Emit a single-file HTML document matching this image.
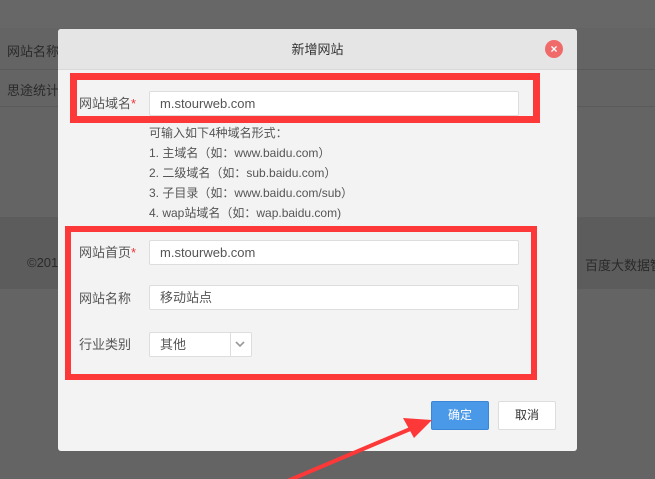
<!DOCTYPE html>
<html><head><meta charset="utf-8"><style>
*{margin:0;padding:0;box-sizing:border-box}
body{width:655px;height:479px;overflow:hidden;position:relative;background:#646464;font-family:"Liberation Sans","Noto Sans CJK SC",sans-serif;font-size:12px;color:#333}
.a{position:absolute;white-space:nowrap}
.inp{position:absolute;background:#fff;border:1px solid #ddd;border-radius:2px;font-size:13px;color:#555;padding-left:10px;line-height:23px}
.lab{position:absolute;left:79px;font-size:13px;color:#555}
.help{position:absolute;left:149px;font-size:12px;color:#555;line-height:20px;top:123px;white-space:nowrap}
</style></head><body>
<div class="a" style="left:0;top:0;width:655px;height:28px;background:#676767"></div>
<div class="a" style="left:0;top:69px;width:655px;height:1px;background:#5a5a5a"></div>
<div class="a" style="left:0;top:106px;width:655px;height:1px;background:#5a5a5a"></div>
<div class="a" style="left:7px;top:41px;font-size:13px;color:#2a2a2a">网站名称</div>
<div class="a" style="left:7px;top:80px;font-size:13px;color:#2a2a2a">思途统计</div>
<div class="a" style="left:0;top:217px;width:655px;height:72px;background:#5c5c5c"></div>
<div class="a" style="left:27px;top:255px;font-size:13px;color:#2a2a2a">©201</div>
<div class="a" style="left:585px;top:255px;font-size:13px;color:#2a2a2a">百度大数据智</div>

<div class="a" style="left:58px;top:29px;width:519px;height:422px;background:#f3f3f3;border-radius:3px;overflow:hidden">
 <div style="height:41px;background:#e5e5e5;border-bottom:1px solid #d8d8d8;text-align:center;line-height:41px;font-size:13px;color:#333">新增网站</div>
</div>
<div class="a" style="left:545px;top:40px;width:18px;height:18px;border-radius:50%;background:#f06a6a;color:#fff;font-size:12px;font-weight:bold;text-align:center;line-height:18px">×</div>

<div class="inp" style="left:149px;top:91px;width:370px;height:25px">m.stourweb.com</div>
<div class="lab" style="top:93px">网站域名<span style="color:#e33">*</span></div>
<div class="a" style="left:70px;top:73px;width:470px;height:50px;border:7px solid #fd3838"></div>
<div class="help">可输入如下4种域名形式：<br>1. 主域名（如：www.baidu.com）<br>2. 二级域名（如：sub.baidu.com）<br>3. 子目录（如：www.baidu.com/sub）<br>4. wap站域名（如：wap.baidu.com)</div>

<div class="inp" style="left:149px;top:240px;width:370px;height:25px">m.stourweb.com</div>
<div class="lab" style="top:242px">网站首页<span style="color:#e33">*</span></div>
<div class="inp" style="left:149px;top:285px;width:370px;height:25px">移动站点</div>
<div class="lab" style="top:288px">网站名称</div>
<div class="inp" style="left:149px;top:332px;width:103px;height:25px">其他</div>
<div class="a" style="left:230px;top:333px;width:1px;height:23px;background:#ddd"></div>
<svg class="a" style="left:234px;top:339px" width="12" height="10"><path d="M2 3l4 4 4-4" stroke="#999" stroke-width="1.6" fill="none"/></svg>
<div class="lab" style="top:334px">行业类别</div>
<div class="a" style="left:65px;top:226px;width:472px;height:154px;border:6px solid #fd3838"></div>

<div class="a" style="left:431px;top:401px;width:58px;height:29px;background:#4a98e8;border:1px solid #3a86d6;border-radius:2px;color:#fff;text-align:center;line-height:27px">确定</div>
<div class="a" style="left:498px;top:401px;width:58px;height:29px;background:#fff;border:1px solid #ddd;border-radius:2px;color:#333;text-align:center;line-height:27px">取消</div>

<svg class="a" style="left:0;top:0" width="655" height="479">
<line x1="285" y1="482" x2="415" y2="427" stroke="#fd3838" stroke-width="4"/>
<polygon points="432,420 403,418 414,438" fill="#fd3838"/>
</svg>
</body></html>
